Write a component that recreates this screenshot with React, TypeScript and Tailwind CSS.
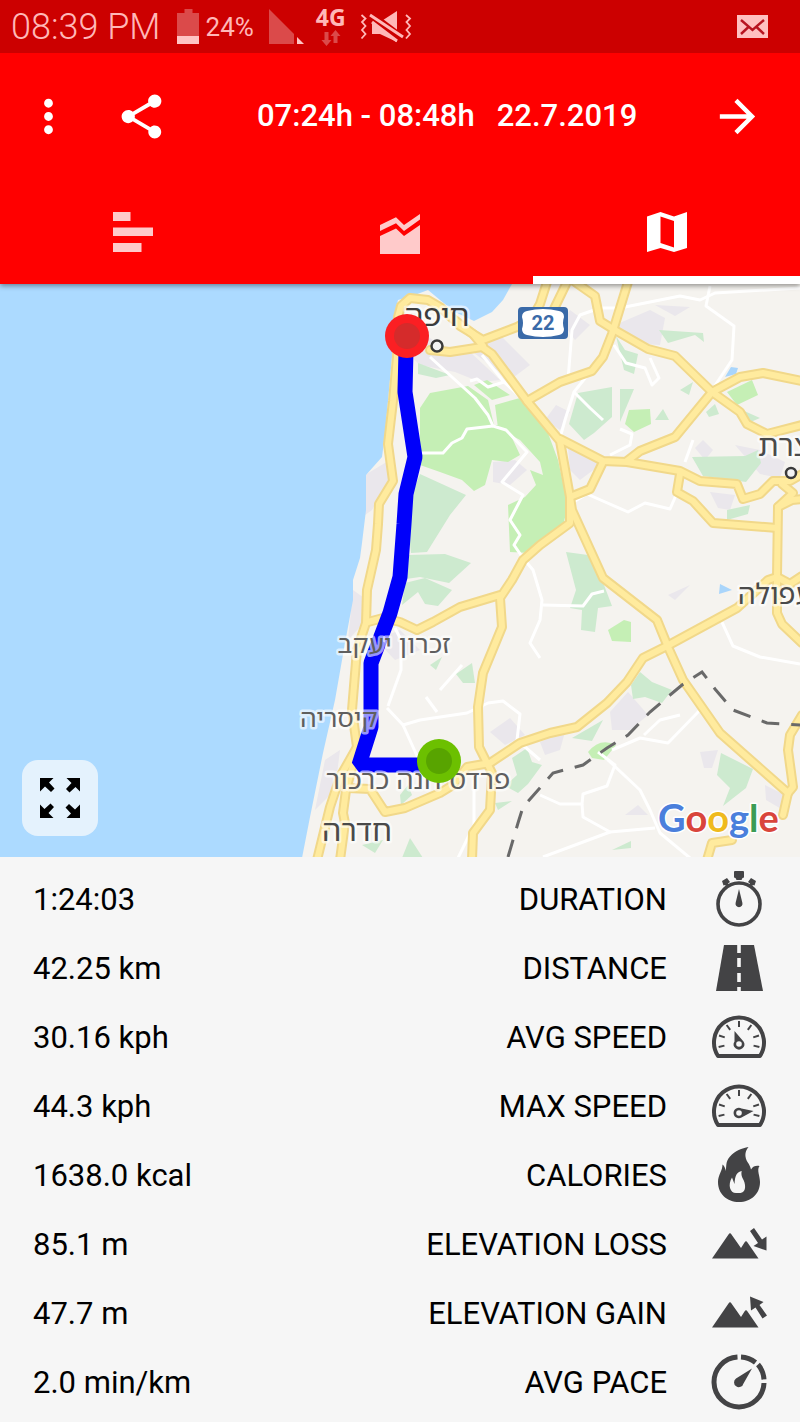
import React from "react";
import { MdMoreVert, MdShare, MdArrowForward } from "react-icons/md";

const mainRoads = [
  "M482 347 L450 352 L430 350",
  "M483 346 L473 334 L452 318 L440 307 L428 300 L410 298 L401 306 L398 317 L397 357 L393 401 L388 444 L393 481 L379 504 L378 524 L376 550 L367 590 L366 623 L357 650 L352 710 L357 747 L340 777 L330 807 L317 860",
  "M357 747 L352 768 L346 790 L343 813 L345 823 L340 860",
  "M348 788 L370 789 L385 812 L405 808 L440 793 L453 785 L467 767 L490 763 L520 743 L550 733 L577 727 L607 703 L627 682 L643 658 L667 646 L737 608 L768 580 L777 577 L790 584 L802 576",
  "M460 326 L483 340 L517 327 L532 318 L540 304 L547 282",
  "M553 311 L567 282",
  "M482 347 L492 354 L527 401 L560 441 L570 497 L572 510 L603 578 L657 620 L668 647 L683 680 L720 733 L788 793 L783 815",
  "M788 793 L793 787 L788 750 L790 735 L802 715",
  "M732 840 L712 843 L707 860",
  "M527 401 L560 382 L592 371 L603 357 L612 334 L628 282",
  "M575 282 L595 296 L600 321 L613 329 L648 349 L675 356 L712 392 L740 412 L747 424 L767 434 L802 425",
  "M712 392 L740 377 L763 373 L802 381",
  "M712 392 L675 437 L640 451 L627 461",
  "M560 439 L603 461 L627 462 L680 471 L700 481 L737 484 L743 499 L760 494 L773 481 L790 481 L802 474",
  "M782 484 L793 493 L778 507 L777 577 L777 613 L782 624 L802 643",
  "M778 507 L792 500 L802 499",
  "M680 474 L677 492 L693 501 L713 523 L777 528",
  "M603 462 L590 489 L570 497",
  "M570 497 L570 523 L540 545 L523 560 L512 580 L500 598 L502 627 L483 673 L478 707 L479 747 L492 773 L490 810 L473 833 L472 860",
  "M500 595 L460 607 L433 622 L417 630 L400 622 L383 618 L368 622",
];

const minorRoads = [
  "M430 357 L475 398 L488 415 L493 426 L506 430 L527 452 L502 482 L523 495 L510 520 L520 535 L514 545 L523 558 L533 570 L542 600 L540 620 L530 643 L540 658",
  "M493 426 L467 429 L462 438 L452 443 L443 453 L420 453",
  "M482 355 L504 382 L488 387 L477 379 L470 381",
  "M504 382 L527 403",
  "M568 380 L572 330 L580 315 L600 308 L620 308 L680 296 L700 300 L715 293 L800 288",
  "M710 286 L706 306 L734 326 L732 360 L712 390",
  "M560 438 L565 420 L574 392 L590 372",
  "M574 392 L590 408 L603 420",
  "M614 345 L626 363 L645 368 L652 385 L659 378 L650 358",
  "M620 429 L632 434 L630 445 L610 455",
  "M570 504 L587 494 L628 512 L645 503 L670 509 L677 493",
  "M722 622 L733 646 L760 657 L800 664",
  "M387 708 L403 725 L420 720 L467 713 L488 703 L503 701 L520 714 L517 740 L540 760",
  "M403 725 L418 758",
  "M388 706 L401 670 L401 640 L395 628",
  "M440 690 L462 665",
  "M437 712 L426 697",
  "M474 780 L474 825 L458 858",
  "M540 795 L560 804 L582 804 L583 794 L607 786 L615 765 L598 752",
  "M582 804 L583 817 L610 832 L543 857",
  "M608 760 L640 790 L650 810 L660 833 L690 858",
  "M610 832 L655 828",
  "M612 750 L640 738 L668 743 L700 710",
  "M644 735 L660 720 L680 715",
  "M543 605 L583 606 L592 594 L604 591",
  "M693 440 L685 462",
];

const lushWoods = [
  "M420 408 L430 393 L468 386 L488 400 L494 425 L506 425 L520 455 L508 462 L492 460 L485 485 L474 491 L462 480 L440 472 L420 465 Z",
  "M495 405 L520 398 L545 425 L558 460 L568 505 L562 530 L530 553 L510 552 L508 505 L525 497 L536 485 L530 470 L543 475 L540 462 L520 440 L498 428 Z",
  "M474 385 L487 380 L510 395 L492 400 Z",
  "M629 410 L650 409 L651 424 L634 432 L625 424 Z",
  "M727 392 L752 380 L758 395 L737 405 Z",
  "M608 630 L624 620 L631 622 L631 642 L612 641 Z",
  "M588 752 Q600 737 616 745 L604 760 L592 758 Z",
];

const paleWoods = [
  "M418 363 L450 375 L436 378 L418 374 Z",
  "M420 474 L466 495 L450 515 L427 552 L411 553 L406 510 Z",
  "M408 555 L445 554 L471 563 L449 583 L420 577 L406 579 Z",
  "M405 583 L425 578 L452 590 L438 606 L425 604 L418 592 L402 605 Z",
  "M430 665 L442 657 L436 670 Z",
  "M456 674 L472 663 L475 683 L463 683 Z",
  "M566 552 L588 555 L604 585 L612 606 L598 608 L595 632 L581 630 L582 610 L570 608 L576 590 Z",
  "M640 672 L652 682 L672 690 L662 703 L645 697 L633 699 L631 685 Z",
  "M572 738 L603 720 L592 741 Z",
  "M721 753 L753 769 L746 788 L723 806 L730 788 L717 775 Z",
  "M578 393 L612 387 L612 417 L594 433 L584 440 L569 424 Z",
  "M620 389 L634 389 L620 422 Z",
  "M655 420 L663 409 L669 420 Z",
  "M659 330 L703 333 L704 342 L695 335 L668 343 Z",
  "M616 336 L625 350 L638 354 L634 374 L624 370 Z",
  "M680 390 L693 382 L689 395 Z",
  "M692 457 L745 456 L758 450 L761 463 L746 482 L703 476 Z",
  "M742 410 L760 418 L746 424 Z",
  "M706 412 L715 404 L719 414 L709 417 Z",
  "M727 510 L750 505 L748 514 L727 520 Z",
  "M512 758 L527 748 L532 762 L542 765 L528 784 L518 793 L505 786 L517 775 Z",
  "M495 803 L512 801 L498 810 Z",
  "M402 858 L410 838 L423 858 Z",
  "M400 795 L408 785 L412 795 L401 805 Z",
  "M612 850 L631 841 L631 848 Z",
  "M362 845 L383 840 L375 853 Z",
];

const towns = [
  "M404 320 L440 345 L470 352 L500 380 L480 382 L455 372 L420 365 L404 350 Z",
  "M470 350 L500 335 L530 365 L510 380 Z",
  "M615 325 L650 310 L665 318 L660 345 L640 344 Z",
  "M655 305 L690 307 L675 316 Z",
  "M365 475 L390 460 L388 480 L372 510 L365 515 Z",
  "M493 462 L515 460 L527 470 L510 485 L493 482 Z",
  "M568 448 L590 455 L600 465 L580 480 L570 470 Z",
  "M556 405 L570 412 L560 430 L545 420 Z",
  "M490 732 L510 718 L525 735 L505 745 Z",
  "M610 712 L628 692 L648 715 L630 730 L612 730 Z",
  "M540 742 L565 732 L560 750 L545 755 Z",
  "M735 445 L760 450 L785 462 L780 478 L760 474 Z",
  "M710 492 L735 495 L730 510 L718 508 Z",
  "M700 752 L718 750 L712 768 L704 768 Z",
  "M765 785 L785 795 L783 810 L766 800 Z",
  "M625 815 L638 805 L648 815 Z",
  "M668 595 L690 585 L675 600 Z",
  "M703 440 L713 450 L705 460 L695 448 Z",
  "M353 590 L367 600 L362 625 L348 640 Z",
  "M325 760 L340 750 L335 790 L315 810 Z",
  "M376 640 L400 630 L420 650 L395 660 Z",
  "M570 310 L590 325 L575 340 L562 322 Z",
];

const placeNames = [
  { name: "חיפה", x: 437, y: 326, size: 30, anchor: "middle", color: "#3c3c3c" },
  { name: "נצרת", x: 758, y: 456, size: 30, anchor: "start", color: "#4a4a4a" },
  { name: "עפולה", x: 738, y: 604, size: 28, anchor: "start", color: "#4a4a4a" },
  { name: "זכרון יעקב", x: 394, y: 653, size: 26, anchor: "middle", color: "#5f5f5f" },
  { name: "קיסריה", x: 339, y: 727, size: 26, anchor: "middle", color: "#5f5f5f" },
  { name: "פרדס חנה כרכור", x: 418, y: 789, size: 27, anchor: "middle", color: "#5f5f5f" },
  { name: "חדרה", x: 357, y: 841, size: 30, anchor: "middle", color: "#4a4a4a" },
] as const;

function RouteMap() {
  return (
    <svg
      viewBox="0 284 800 573"
      preserveAspectRatio="xMidYMid slice"
      className="block w-full"
      role="img"
      aria-label="Route map"
    >
      <rect x="0" y="284" width="800" height="573" fill="#f5f3ef" />
      <g fill="#eae7ec">
        {towns.map((d) => (
          <path key={d} d={d} />
        ))}
      </g>
      <g fill="#cdeacf">
        {paleWoods.map((d) => (
          <path key={d} d={d} />
        ))}
      </g>
      <g fill="#c5efb5">
        {lushWoods.map((d) => (
          <path key={d} d={d} />
        ))}
      </g>
      <path
        fill="#acdaff"
        d="M0 284 H512 L503 300 L492 312 L474 321 L455 312 L440 300 L428 290 L412 296 L398 300 L394 316 L392 357 L385 434 L382 457 L366 475 L366 510 L362 543 L360 558 L353 580 L353 600 L345 643 L335 700 L323 753 L310 817 L302 858 H0 Z"
      />
      <path fill="#a9d5fb" d="M725 377 L731 367 L738 368 L736 374 Z M720 584 L732 590 L719 594 Z" />
      <g fill="none" stroke="#ffffff" strokeWidth="3" strokeLinejoin="round">
        {minorRoads.map((d) => (
          <path key={d} d={d} />
        ))}
      </g>
      <g fill="none" stroke="#f1d88a" strokeWidth="10" strokeLinejoin="round" strokeLinecap="round">
        {mainRoads.map((d) => (
          <path key={d} d={d} />
        ))}
      </g>
      <g fill="none" stroke="#ffeb9e" strokeWidth="6" strokeLinejoin="round" strokeLinecap="round">
        {mainRoads.map((d) => (
          <path key={d} d={d} />
        ))}
      </g>
      <path
        fill="none"
        stroke="#696969"
        strokeWidth="3"
        strokeDasharray="18 12"
        d="M508 857 L518 823 L523 807 L553 773 L583 765 L607 748 L628 735 L650 712 L670 695 L682 685 L702 672 L715 689 L733 710 L767 723 L800 725"
      />
      <path
        fill="none"
        stroke="#0000fa"
        strokeWidth="15"
        strokeLinejoin="bevel"
        d="M406 350 L405 392 L415 457 L406 494 L404 524 L400 577 L390 613 L371 663 L371 727 L359 765 L438 765"
      />
      <g
        fontFamily="'Noto Sans Hebrew', 'Open Sans', 'Liberation Sans', sans-serif"
        strokeLinejoin="round"
        stroke="#ffffff"
        strokeOpacity="0.6"
        strokeWidth="5"
        paintOrder="stroke"
      >
        {placeNames.map((p) => (
          <text key={p.name} x={p.x} y={p.y} fontSize={p.size} textAnchor={p.anchor} fill={p.color}>
            {p.name}
          </text>
        ))}
      </g>
      <g fill="#f3f3f3" stroke="#3a3a3a" strokeWidth="2.5">
        <circle cx="437" cy="346" r="5.5" />
        <circle cx="791" cy="473" r="5" />
      </g>
      <rect x="518" y="307" width="50" height="32" rx="4" fill="#3a6aa8" />
      <path
        fill="#ffffff"
        d="M527 311 Q543 307 559 311 Q564 312 564 317 Q562 323 564 329 Q564 334 559 335 Q543 339 527 335 Q522 334 522 329 Q524 323 522 317 Q522 312 527 311 Z"
      />
      <text x="543" y="330" fontFamily="Roboto, sans-serif" fontWeight="700" fontSize="20" textAnchor="middle" fill="#3a6aa8">
        22
      </text>
      <circle cx="407" cy="336" r="22" fill="#fb1f23" />
      <circle cx="407" cy="336" r="13" fill="#d52b2b" />
      <circle cx="439" cy="761" r="22" fill="#6cc000" />
      <circle cx="439" cy="761" r="13" fill="#58a400" />
      <text
        x="658"
        y="832"
        fontFamily="Lato, sans-serif"
        fontWeight="700"
        fontSize="38"
        stroke="#ffffff"
        strokeWidth="3"
        strokeLinejoin="round"
        paintOrder="stroke"
      >
        <tspan fill="#4a7fdc">G</tspan>
        <tspan fill="#d9453c">o</tspan>
        <tspan fill="#efba1d">o</tspan>
        <tspan fill="#4a7fdc">g</tspan>
        <tspan fill="#3b9c55">l</tspan>
        <tspan fill="#d9453c">e</tspan>
      </text>
    </svg>
  );
}

function StatIcon({ children }: { children: React.ReactNode }) {
  return (
    <svg viewBox="0 0 58 59" className="h-[59px] w-[58px] shrink-0 text-[#434345]" fill="currentColor" aria-hidden="true">
      {children}
    </svg>
  );
}

function GaugeFace() {
  return (
    <>
      <path d="M8 47 A25 25 0 1 1 50 47 Z" fill="none" stroke="currentColor" strokeWidth="4" strokeLinejoin="round" />
      <g stroke="currentColor" strokeWidth="2">
        {[-104, -72, -36, 0, 36, 72, 104].map((a) => (
          <path key={a} d="M29 12 V18" transform={`rotate(${a} 29 33)`} />
        ))}
      </g>
    </>
  );
}

const stopwatch = (
  <>
    <circle cx="29" cy="33" r="21" fill="none" stroke="currentColor" strokeWidth="3.6" />
    <path d="M24 1 Q24 0 25 0 H33 Q34 0 34 1 V6 Q34 7 32.500 7 L31.500 9 H26.500 L25.500 7 Q24 7 24 6 Z" />
    <path d="M12 10 L17 7 L20 11 L18 12.500 L18.500 13.500 L16 15 L15 14 L13.500 14.500 Z M46 10 L41 7 L38 11 L40 12.500 L39.500 13.500 L42 15 L43 14 L44.500 14.500 Z" />
    <path d="M29 18 L32.300 31.500 A3.500 3.500 0 1 1 25.700 31.500 Z" />
  </>
);

const road = (
  <>
    <path d="M14 5 H44 L53 51 H6 Z" />
    <path d="M27.200 5 H30.800 V13 H27.200 Z M27.200 18 H30.800 V27 H27.200 Z M27.200 33 H30.800 V42 H27.200 Z M27.200 47 H30.800 V51 H27.200 Z" fill="#f6f6f6" />
  </>
);

const averageGauge = (
  <>
    <GaugeFace />
    <path d="M24.500 22 L33.500 32.500 A5.300 5.300 0 1 1 24.500 32.500 Z" />
    <circle cx="29" cy="35" r="2.8" fill="#f6f6f6" />
  </>
);

const maximumGauge = (
  <>
    <GaugeFace />
    <path d="M43.500 33 L31.500 39.600 A5.300 5.300 0 1 1 31.500 30.400 Z" />
    <circle cx="29" cy="35" r="2.800" fill="#f6f6f6" />
  </>
);

const flame = (
  <>
    <path d="M38.500 0 C34 5 35 11 37.500 15 C39.500 18 40.500 20 41 22.500 C43 19 46 18.500 49.500 19 C46.500 23 50 29 50 35 C50 47 41 55 29 55 C17 55 8 47 8 35 C8 28 12.500 24 12.500 17.500 C14.500 19 15.500 21.500 15.500 24 C17 19 15 15 20 9.500 C25 4 32 1 38.500 0 Z" />
    <path d="M31.700 24 C27 25 25 28 24.500 37 L22 30.500 C17.500 38 20 46 26 46 H30.500 C37 45 35.500 36 33 32 C31.500 29 31 27 31.700 24 Z" fill="#f6f6f6" />
  </>
);

const mountains = <path d="M2 42.500 L18.500 18.500 Q20 16 21.500 18.500 L31 32 L34.500 26.500 Q36 24 37.500 26.500 L48.500 42.500 Z" />;

const descent = (
  <>
    {mountains}
    <path d="M40 15 L44 12 L52 23.500 L56.500 20.500 V34.500 L43.500 30 L48 27 Z" />
  </>
);

const ascent = (
  <>
    {mountains}
    <path d="M40 11.500 L53.500 17 L49.500 20 L57 30.500 L52.500 33.500 L45.500 22.500 L41 25.500 Z" />
  </>
);

const pace = (
  <>
    <g fill="none" stroke="currentColor" strokeWidth="5">
      <path d="M27.500 3 A25 25 0 1 0 54 29" />
      <path d="M31 3 A25 25 0 0 1 45.500 8.500" />
      <path d="M48 10.500 A25 25 0 0 1 54 25.500" />
    </g>
    <path d="M42 14.500 L33.500 29.500 A4.800 4.800 0 1 1 26 24.500 Z" />
  </>
);

const stats = [
  { label: "DURATION", value: "1:24:03", icon: stopwatch },
  { label: "DISTANCE", value: "42.25 km", icon: road },
  { label: "AVG SPEED", value: "30.16 kph", icon: averageGauge },
  { label: "MAX SPEED", value: "44.3 kph", icon: maximumGauge },
  { label: "CALORIES", value: "1638.0 kcal", icon: flame },
  { label: "ELEVATION LOSS", value: "85.1 m", icon: descent },
  { label: "ELEVATION GAIN", value: "47.7 m", icon: ascent },
  { label: "AVG PACE", value: "2.0 min/km", icon: pace },
];

function StatusBar() {
  return (
    <div className="flex h-[53px] items-center bg-[#cc0000] pr-8 pl-[11px] text-[#ffb8b8]">
      <span className="text-[36px] leading-none font-light whitespace-nowrap">08:39 PM</span>
      <svg viewBox="0 0 22 35" className="ml-4 h-[35px] w-[22px] shrink-0" aria-hidden="true">
        <path d="M0 4 H7.500 V0 H15.500 V4 H22 V27 H0 Z" fill="#db4a4a" />
        <path d="M0 27 H22 V35 H0 Z" fill="#ffc4c4" />
      </svg>
      <span className="ml-[7px] text-[26px] leading-none">24%</span>
      <svg viewBox="0 0 35 35" className="ml-[15px] h-[35px] w-[35px] shrink-0" aria-hidden="true">
        <path d="M0 0 L25 25 V35 H0 Z" fill="#db4a4a" />
        <path d="M28 28 L35 35 H28 Z" fill="#ffc4c4" />
      </svg>
      <span className="ml-[12px] flex flex-col items-center pb-1">
        <span className="font-['Open_Sans',sans-serif] text-[23px] leading-[26px] font-bold">4G</span>
        <svg viewBox="0 0 20 16" className="h-4 w-5" fill="#db4a4a" aria-hidden="true">
          <path d="M3.500 2 H7.500 V10 H10.500 L5.500 16 L0.500 10 H3.500 Z M12.500 13 V6 H9.500 L14.500 0 L19.500 6 H16.500 V13 Z" />
        </svg>
      </span>
      <svg viewBox="0 0 52 34" className="ml-[14px] h-[34px] w-[52px] shrink-0" aria-hidden="true">
        <g fill="none" stroke="#ffb8b8" strokeWidth="1.8">
          <path d="M1.500 5 L5.500 8.500 L2 12 L5.500 16 L2 20 L5.500 24 L1.500 28.500" />
          <path d="M46 5 L50 8.500 L46.500 12 L50 16 L46.500 20 L50 24 L46 28.500" />
        </g>
        <path d="M12 12 H20 L37 1 V32 L20 24 H12 Z" fill="#ffb8b8" />
        <path d="M9 4 L42 29" stroke="#cc0000" strokeWidth="9" />
        <path d="M10 5 L43 27 M12 12 L37 31" stroke="#ffb8b8" strokeWidth="3" />
      </svg>
      <svg viewBox="0 0 31 23" className="ml-auto h-[23px] w-[31px] shrink-0" aria-hidden="true">
        <rect width="31" height="23" fill="#ffc0c0" />
        <path d="M4 5 L15.500 15 L27 5 M4 19 L12 11.500 M27 19 L19 11.500" fill="none" stroke="#b81420" strokeWidth="2.400" />
      </svg>
    </div>
  );
}

const tabClass = "relative flex h-[105px] flex-1 cursor-pointer items-center justify-center";

export default function App() {
  return (
    <div className="flex min-h-screen w-full flex-col bg-[#f6f6f6] font-[Roboto,sans-serif] text-black">
      <header className="relative z-10 bg-[#ff0000] text-white shadow-[0_2px_5px_rgba(0,0,0,0.4)]">
        <StatusBar />
        <div className="flex h-[126px] items-center pr-9 pl-[22px]">
          <button type="button" aria-label="More options">
            <MdMoreVert size={53} />
          </button>
          <button type="button" aria-label="Share" className="ml-10">
            <MdShare size={53} />
          </button>
          <h1 className="ml-[89px] flex flex-1 gap-[22px] text-[31px] leading-9 font-medium whitespace-nowrap">
            <span>07:24h - 08:48h</span>
            <span>22.7.2019</span>
          </h1>
          <button type="button" aria-label="Next">
            <MdArrowForward size={53} />
          </button>
        </div>
        <div role="tablist" className="flex">
          <button type="button" role="tab" aria-selected="false" aria-label="Summary" className={tabClass}>
            <svg viewBox="0 0 40 40" className="h-10 w-10" fill="#ffcaca" aria-hidden="true">
              <path d="M0 0 H17.500 V9 H0 Z M0 15.500 H40 V24 H0 Z M0 31 H28.500 V40 H0 Z" />
            </svg>
          </button>
          <button type="button" role="tab" aria-selected="false" aria-label="Charts" className={tabClass}>
            <svg viewBox="0 0 40 44" className="h-11 w-10" fill="#ffcaca" aria-hidden="true">
              <path d="M0 15 L16 7.300 L24 15 L40 4 V9.500 L24 21 L16 13.300 L0 21 Z" />
              <path d="M0 26 L16 18.500 L24 26 L40 15 V44 H0 Z" />
            </svg>
          </button>
          <button type="button" role="tab" aria-selected="true" aria-label="Map" className={tabClass}>
            <svg viewBox="0 0 40 40" className="h-10 w-10" aria-hidden="true">
              <path
                fill="#ffffff"
                fillRule="evenodd"
                d="M0 4.500 L13.500 0 L27 4.500 L40 0 V36 L27 40 L13.500 36 L0 40 Z M13.500 4.500 L27 9 V35.500 L13.500 31 Z"
              />
            </svg>
            <span className="absolute inset-x-0 bottom-0 h-2 bg-white" />
          </button>
        </div>
      </header>

      <main>
        <section className="relative" aria-label="Map">
          <RouteMap />
          <button
            type="button"
            aria-label="Full screen"
            className="absolute bottom-[21px] left-[22px] flex h-[76px] w-[76px] items-center justify-center rounded-2xl bg-[#e4f2fd]"
          >
            <svg viewBox="0 0 40 40" className="h-10 w-10" aria-hidden="true">
              {[0, 90, 180, 270].map((a) => (
                <path key={a} d="M0 0 H13.500 L9 4.500 L14.500 10.500 L11 14 L5 8.500 L0 13.500 Z" transform={`rotate(${a} 20 20)`} />
              ))}
            </svg>
          </button>
        </section>

        <dl className="pt-[9px]">
          {stats.map((s) => (
            <div key={s.label} className="flex h-[69px] items-center pr-8 pl-[33px] text-[31px] leading-9">
              <dt className="order-2 mr-[43px] pb-[2px]">{s.label}</dt>
              <dd className="order-1 flex-1 pb-[2px]">{s.value}</dd>
              <span className="order-3">
                <StatIcon>{s.icon}</StatIcon>
              </span>
            </div>
          ))}
        </dl>
      </main>
    </div>
  );
}
